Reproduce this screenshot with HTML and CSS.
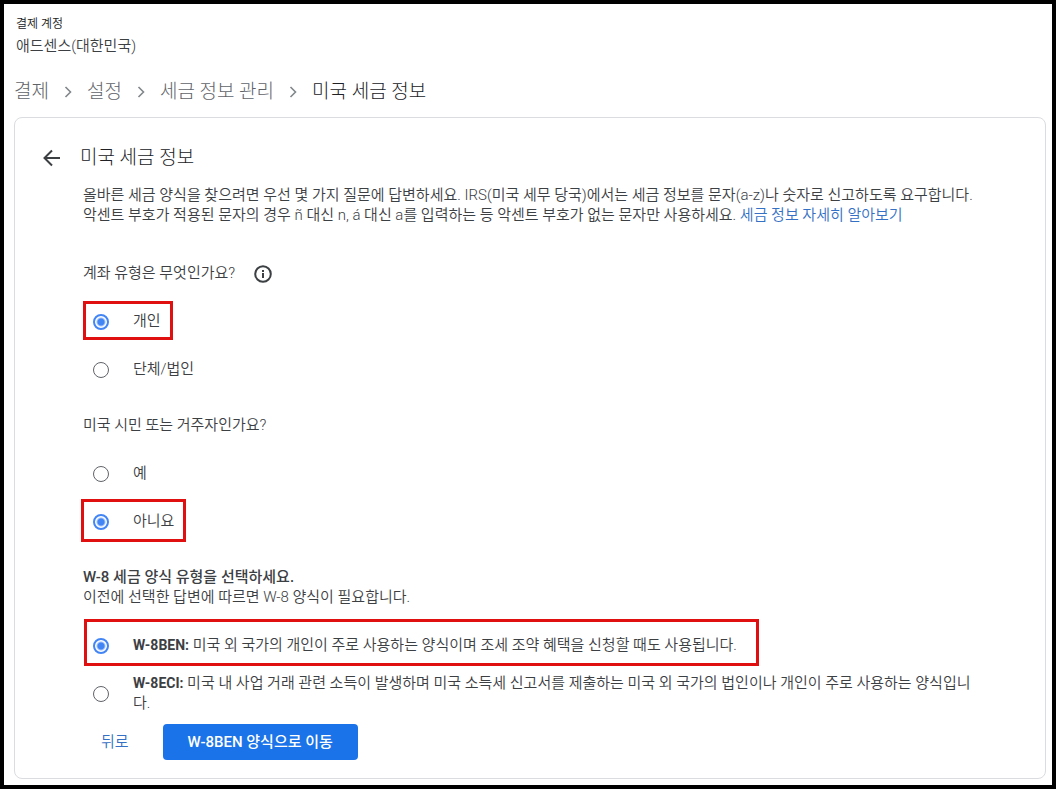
FILE: index.html
```html
<!DOCTYPE html>
<html lang="ko">
<head>
<meta charset="utf-8">
<meta name="viewport" content="width=device-width, initial-scale=1">
<title>미국 세금 정보</title>
<link rel="stylesheet" href="styles.css">
</head>
<body>
<header class="account">
  <div class="account-label">결제 계정</div>
  <div class="account-name">애드센스(대한민국)</div>
</header>
<nav class="crumbs" aria-label="탐색 경로">
  <a href="#">결제</a>
  <svg class="chevron" viewBox="0 0 8 12" aria-hidden="true"><path d="M1.5 1l5 5-5 5"/></svg>
  <a href="#">설정</a>
  <svg class="chevron" viewBox="0 0 8 12" aria-hidden="true"><path d="M1.5 1l5 5-5 5"/></svg>
  <a href="#">세금 정보 관리</a>
  <svg class="chevron" viewBox="0 0 8 12" aria-hidden="true"><path d="M1.5 1l5 5-5 5"/></svg>
  <span class="current" aria-current="page">미국 세금 정보</span>
</nav>
<main class="card">
  <div class="card-head">
    <button class="back" type="button" aria-label="뒤로">
      <svg viewBox="0 0 18 18" aria-hidden="true"><path d="M17 9H2M9 1.5L1.5 9 9 16.5"/></svg>
    </button>
    <h1>미국 세금 정보</h1>
  </div>
  <form class="form">
    <p class="intro">올바른 세금 양식을 찾으려면 우선 몇 가지 질문에 답변하세요. IRS(미국 세무 당국)에서는 세금 정보를 문자(a-z)나 숫자로 신고하도록 요구합니다.<br>악센트 부호가 적용된 문자의 경우 ñ 대신 n, á 대신 a를 입력하는 등 악센트 부호가 없는 문자만 사용하세요. <a href="#">세금 정보 자세히 알아보기</a></p>

    <fieldset class="group">
      <legend class="question">계좌 유형은 무엇인가요?
        <svg class="info" viewBox="0 0 18 18" aria-hidden="true"><circle cx="9" cy="9" r="7.8"/><path d="M9 8v5M9 5v2"/></svg>
      </legend>
      <label class="option marked mark-person"><input type="radio" name="type" checked><span>개인</span></label>
      <label class="option"><input type="radio" name="type"><span>단체/법인</span></label>
    </fieldset>

    <fieldset class="group">
      <legend class="question">미국 시민 또는 거주자인가요?</legend>
      <label class="option"><input type="radio" name="resident"><span>예</span></label>
      <label class="option marked mark-no"><input type="radio" name="resident" checked><span>아니요</span></label>
    </fieldset>

    <fieldset class="group">
      <legend class="question"><b class="form-title">W-8 세금 양식 유형을 선택하세요.</b><br>이전에 선택한 답변에 따르면 W-8 양식이 필요합니다.</legend>
      <label class="option marked mark-ben"><input type="radio" name="form" checked><span><b>W-8BEN:</b> 미국 외 국가의 개인이 주로 사용하는 양식이며 조세 조약 혜택을 신청할 때도 사용됩니다.</span></label>
      <label class="option"><input type="radio" name="form"><span><b>W-8ECI:</b> 미국 내 사업 거래 관련 소득이 발생하며 미국 소득세 신고서를 제출하는 미국 외 국가의 법인이나 개인이 주로 사용하는 양식입니다.</span></label>
    </fieldset>

    <div class="actions">
      <button class="btn-text" type="button">뒤로</button>
      <button class="btn-primary" type="button">W-8BEN 양식으로 이동</button>
    </div>
  </form>
</main>
</body>
</html>
```
FILE: styles.css
```css
* { box-sizing: border-box; }

body {
  margin: 0;
  min-height: 100vh;
  padding: 10px 6px 6px 10px;
  border: 4px solid #000;
  background: #fff;
  color: #3c4043;
  font: 350 15px/20px Roboto, "Noto Sans CJK KR", sans-serif;
}

a { color: #3470c4; text-decoration: none; }
b { font-weight: 700; }

.account { padding-left: 2px; }
.account-label { font-size: 12px; line-height: 20px; color: #202124; }
.account-name { line-height: 24px; }

.crumbs {
  display: flex;
  align-items: center;
  gap: 15px;
  margin: 20px 0 12px;
  font-size: 19px;
  font-weight: 300;
  line-height: 27px;
}
.crumbs a { color: #5f6368; }
.crumbs .current { color: #202124; }
.chevron {
  width: 8px;
  height: 12px;
  fill: none;
  stroke: #80868b;
  stroke-width: 1.6;
}

.card {
  padding: 26px 60px 18px 24px;
  border: 1px solid #dadce0;
  border-radius: 8px;
}
.card-head { display: flex; align-items: center; gap: 15px; }
.back {
  display: grid;
  place-items: center;
  width: 26px;
  height: 28px;
  padding: 0;
  border: 0;
  background: none;
}
.back svg {
  width: 18px;
  height: 18px;
  fill: none;
  stroke: #3c4043;
  stroke-width: 2;
}
h1 { margin: 0; font-size: 19px; font-weight: 300; line-height: 28px; color: #202124; }

.form { padding: 13px 0 0 44px; }
.intro { margin: 0 0 38px; }

.group { min-width: 0; margin: 0 0 21px; padding: 0; border: 0; }
.group:last-of-type { margin-bottom: 6px; }
.question { padding: 0; margin-bottom: 15px; }
.form-title { font-weight: 500; }
.info {
  width: 18px;
  height: 18px;
  margin-left: 15px;
  vertical-align: -5px;
  fill: none;
  stroke: #3c4043;
  stroke-width: 2;
}

.option {
  position: relative;
  display: flex;
  align-items: center;
  gap: 24px;
  width: fit-content;
  min-height: 48px;
  padding-left: 10px;
}
.option span { padding-bottom: 2px; }
.option b { font-size: 14px; }
.option input {
  appearance: none;
  flex: none;
  width: 16px;
  height: 16px;
  margin: 0;
  border: 1px solid #5f6368;
  border-radius: 50%;
}
.option input:checked {
  border: 2px solid #4285f4;
  background: radial-gradient(circle, #4285f4 3px, #fff 5px);
}

.marked::after {
  content: "";
  position: absolute;
  border: 3px solid #e01010;
  pointer-events: none;
}
.mark-person::after { inset: 3px -12px 6px 0; }
.mark-no::after { inset: 1px -12px 4px -2px; }
.mark-ben::after { inset: -3px -22px 4px 1px; }

.actions { display: flex; gap: 16px; }
.actions button {
  height: 36px;
  border: 0;
  border-radius: 4px;
  font: inherit;
}
.btn-text { padding: 0 18px; background: none; color: #3470c4; }
.btn-primary { padding: 0 25px; background: #1a73e8; color: #fff; }
.actions .btn-primary { font-weight: 500; }
```
